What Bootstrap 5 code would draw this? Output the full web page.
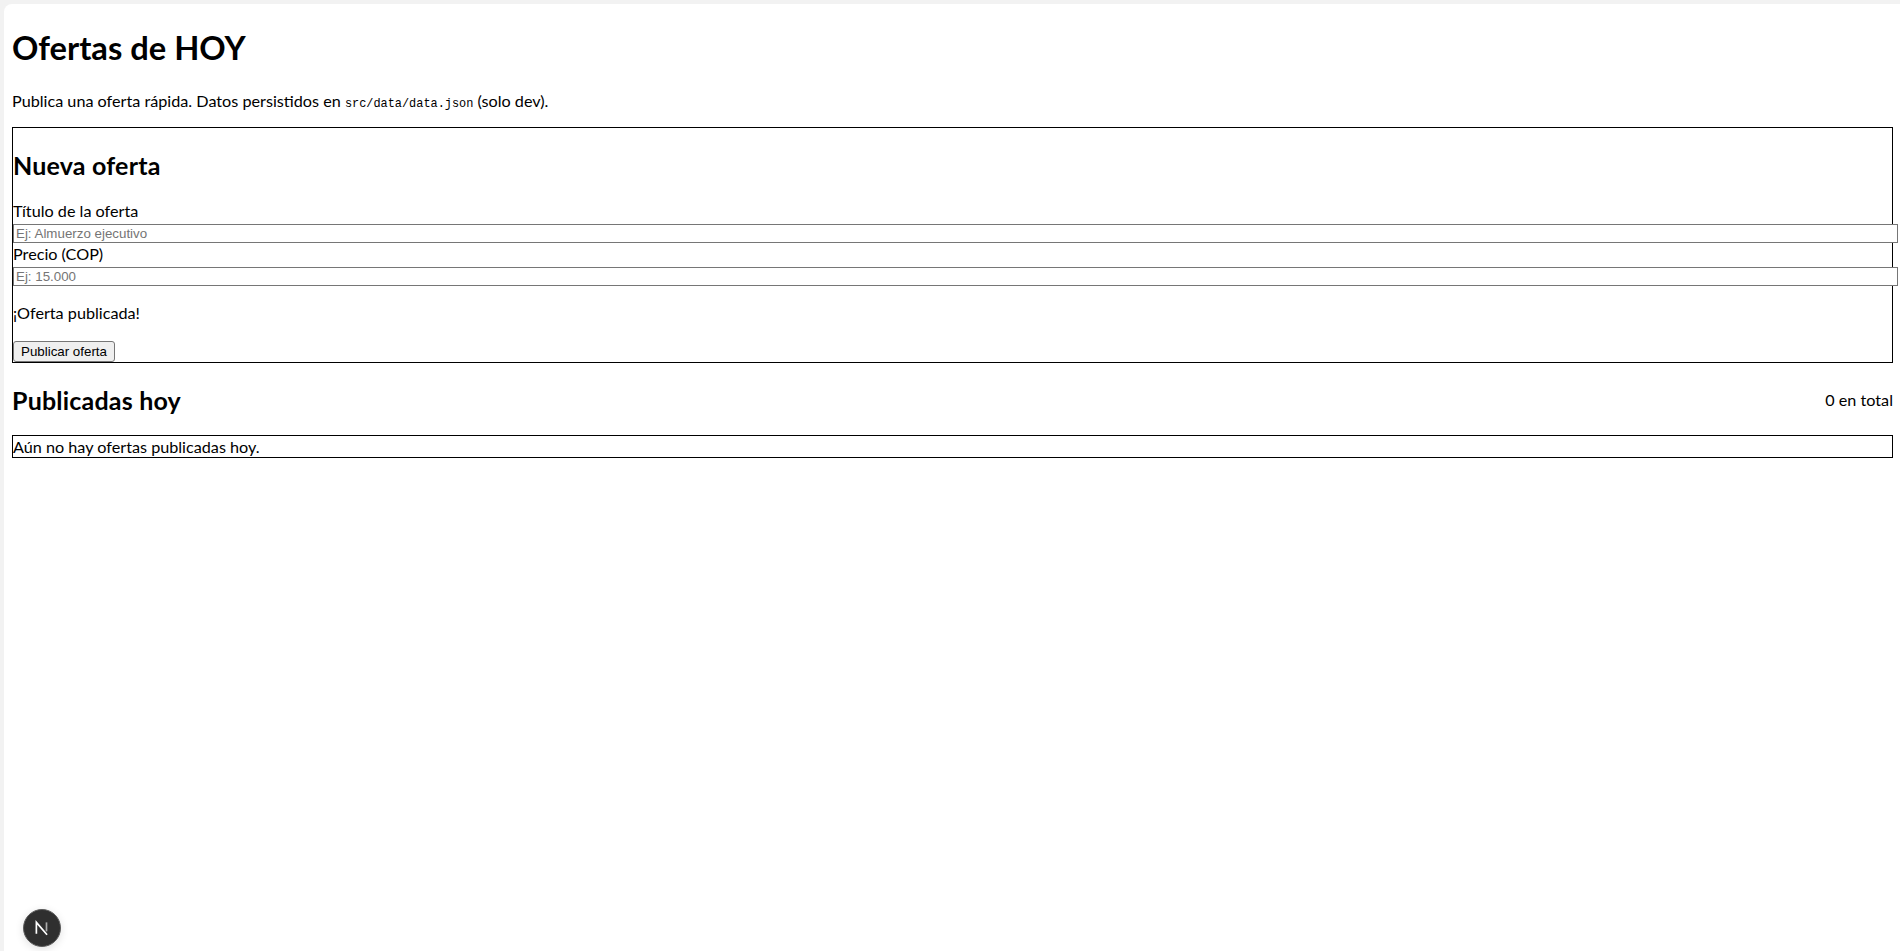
<!doctype html>
<html lang="es">
<head>
<meta charset="utf-8">
<title>Ofertas de HOY</title>
<link href="https://cdn.jsdelivr.net/npm/bootstrap@5.3.0/dist/css/bootstrap.min.css" rel="stylesheet">
<style>
html,body{height:100%}
body{background:#f2f2f2;font-family:Lato,"Open Sans",sans-serif;font-size:16.2px;line-height:24px;color:#000;overflow:hidden}
.app-frame{margin:4px 0 0 4px;height:calc(100vh - 4px);background:#fff;border-top-left-radius:8px;padding:1px 7px 0 8px}
.page-title{font-size:32.7px;font-weight:700;line-height:43px;margin:21px 0 21px}
.page-intro{line-height:21px;margin:0 0 12px}
.intro-code{font-family:"Liberation Mono",monospace;font-size:11.9px;color:#000}
.form-box{border:1px solid #000}
.form-heading{font-size:25px;font-weight:700;letter-spacing:.2px;line-height:32px;margin:21px 0 19px}
.field-label{display:block;margin:0;line-height:22px;padding-bottom:2px}
.plain-input{display:block;box-sizing:content-box;width:100%;height:15px;padding:1px 2px;border:1px solid #767676;border-radius:0;font:13.33px/15px "Liberation Sans",sans-serif;color:#000;background:#fff;outline:0;margin:0;position:relative}
.plain-input::placeholder{color:#757575;opacity:1}
.status-line{margin:15px 0 16px}
.plain-btn{display:block;font:13.33px/15px "Liberation Sans",sans-serif;color:#000;background:#efefef;border:1px solid #767676;border-radius:3px;padding:2px 7px;height:21px}
.list-head{margin:21px 0 19px}
.list-title{font-size:25px;font-weight:700;letter-spacing:.2px;line-height:32px;margin:0}
.empty-box{border:1px solid #000;line-height:21px}
.dev-badge{position:fixed;left:23px;top:909px;width:38px;height:38px;border-radius:50%;background:#2f2f2f;border:1px solid #5c5c5c;box-shadow:0 2px 8px rgba(0,0,0,.12)}
</style>
</head>
<body>
<div class="app-frame">
  <h1 class="page-title">Ofertas de HOY</h1>
  <p class="page-intro">Publica una oferta rápida. Datos persistidos en <code class="intro-code">src/data/data.json</code> (solo dev).</p>
  <form class="form-box">
    <h2 class="form-heading">Nueva oferta</h2>
    <label class="field-label" for="t">Título de la oferta</label>
    <input class="plain-input" id="t" placeholder="Ej: Almuerzo ejecutivo">
    <label class="field-label" for="p">Precio (COP)</label>
    <input class="plain-input" id="p" placeholder="Ej: 15.000">
    <p class="status-line">¡Oferta publicada!</p>
    <button type="button" class="plain-btn">Publicar oferta</button>
  </form>
  <div class="d-flex justify-content-between align-items-center list-head">
    <h2 class="list-title">Publicadas hoy</h2>
    <span>0 en total</span>
  </div>
  <div class="empty-box">Aún no hay ofertas publicadas hoy.</div>
</div>
<div class="dev-badge d-flex align-items-center justify-content-center">
  <svg width="18" height="18" viewBox="0 0 16 16" fill="none"><path d="M3 13V3l9.5 11" stroke="#fff" stroke-width="1.5"/><path d="M12 3v8" stroke="#aaa" stroke-width="1.5"/></svg>
</div>
<script src="https://cdn.jsdelivr.net/npm/bootstrap@5.3.0/dist/js/bootstrap.bundle.min.js"></script>
</body>
</html>
